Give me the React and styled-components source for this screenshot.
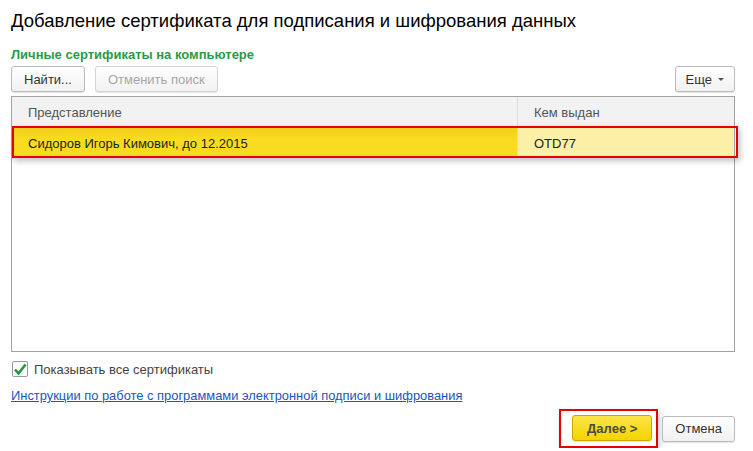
import React from 'react';
import styled, { createGlobalStyle } from 'styled-components';

const GlobalStyle = createGlobalStyle`
  body {
    margin: 0;
    background: #fff;
    font-family: "Liberation Sans", Arial, sans-serif;
    color: #333;
  }
`;

const Form = styled.div`
  width: 753px;
  box-sizing: border-box;
  padding: 9px 18px 0 11px;
  display: flex;
  flex-direction: column;
`;

const Title = styled.h1`
  margin: 0;
  font-size: 18.5px;
  line-height: 23px;
  font-weight: normal;
  color: #000;
`;

const GroupCaption = styled.div`
  margin-top: 15px;
  font-size: 13px;
  line-height: 16px;
  font-weight: bold;
  color: #2a9a48;
`;

const Toolbar = styled.div`
  display: flex;
  gap: 10px;
  margin-top: 3px;
`;

const Spacer = styled.div`
  flex: 1;
`;

const Button = styled.button`
  height: 26px;
  padding: 0 ${(p) => p.$pad || 12}px;
  box-sizing: border-box;
  border: 1px solid ${(p) => (p.disabled ? '#d4d4d4' : '#bcbcbc')};
  border-radius: 3px;
  background: linear-gradient(#ffffff, #f1f1f1);
  box-shadow: 0 1px 1px rgba(0, 0, 0, 0.12);
  font-family: inherit;
  font-size: 13px;
  color: ${(p) => (p.disabled ? '#a6a6a6' : '#333')};
  display: flex;
  align-items: center;
  gap: 6px;
`;

const PrimaryButton = styled(Button)`
  border-color: #c9a800;
  background: linear-gradient(#fbe54a, #f5d300);
  font-weight: bold;
  color: #4a4a4a;
`;

const Caret = styled.span`
  width: 0;
  height: 0;
  border-left: 3px solid transparent;
  border-right: 3px solid transparent;
  border-top: 3px solid #555;
  margin-top: 1px;
`;

const Table = styled.div`
  flex-shrink: 0;
  margin-top: 4px;
  height: 254px;
  border: 1px solid #a3a3a3;
  display: flex;
  flex-direction: column;
  position: relative;
`;

const Row = styled.div`
  display: grid;
  grid-template-columns: 505px 1fr;
  height: 30px;
  border-bottom: 1px solid ${(p) => (p.$head ? '#e0e0e0' : 'transparent')};
`;

const Cell = styled.div`
  display: flex;
  align-items: center;
  padding-left: 16px;
  font-size: 13px;
  color: ${(p) => (p.$head ? '#555' : '#222')};
  background: ${(p) => p.$bg || 'transparent'};
  border-left: ${(p) => (p.$divider ? '1px solid #dcdcdc' : 'none')};
  white-space: nowrap;
`;

const Highlight = styled.div`
  position: absolute;
  left: 0;
  right: -4px;
  top: ${(p) => p.$top}px;
  height: 32px;
  border: 2px solid #e60000;
  box-sizing: border-box;
  box-shadow: 2px 3px 6px rgba(0, 0, 0, 0.25);
  pointer-events: none;
`;

const CheckRow = styled.label`
  display: flex;
  align-items: center;
  gap: 6px;
  margin-top: 9px;
  font-size: 13px;
  color: #444;
  margin-left: 1px;
`;

const Box = styled.span`
  width: 14px;
  height: 14px;
  border: 1px solid #9a9a9a;
  border-radius: 2px;
  background: #fff;
  display: flex;
  align-items: center;
  justify-content: center;
`;

const Link = styled.a`
  margin-top: 11px;
  font-size: 12.9px;
  color: #1d56b8;
  text-decoration: underline;
  align-self: flex-start;
`;

const Footer = styled.div`
  display: flex;
  justify-content: flex-end;
  align-items: center;
  gap: 10px;
  margin-top: 6px;
`;

const Marked = styled.div`
  padding: 4px 4px 5px 11px;
  border: 2px solid #e60000;
  box-shadow: 2px 3px 6px rgba(0, 0, 0, 0.2);
  margin-right: -6px;
`;

export default function App() {
  return (
    <>
      <GlobalStyle />
      <Form>
        <Title>Добавление сертификата для подписания и шифрования данных</Title>
        <GroupCaption>Личные сертификаты на компьютере</GroupCaption>
        <Toolbar>
          <Button>Найти...</Button>
          <Button disabled>Отменить поиск</Button>
          <Spacer />
          <Button $pad={10}>
            Еще <Caret />
          </Button>
        </Toolbar>
        <Table>
          <Row $head>
            <Cell $head $bg="#f2f2f2">Представление</Cell>
            <Cell $head $bg="#f2f2f2" $divider>Кем выдан</Cell>
          </Row>
          <Row>
            <Cell $bg="linear-gradient(#f1cf1a, #f9dc20 40%, #f9dc20)">Сидоров Игорь Кимович, до 12.2015</Cell>
            <Cell $bg="#fcf0a6" $divider>OTD77</Cell>
          </Row>
          <Highlight $top={29} />
        </Table>
        <CheckRow>
          <Box>
            <svg width="14" height="13" viewBox="0 0 14 13">
              <path d="M2 6.5 L5.5 10.5 L12.5 1.5" fill="none" stroke="#1f9a3a" strokeWidth="2.6" />
            </svg>
          </Box>
          Показывать все сертификаты
        </CheckRow>
        <Link href="#">Инструкции по работе с программами электронной подписи и шифрования</Link>
        <Footer>
          <Marked>
            <PrimaryButton $pad={14}>Далее &gt;</PrimaryButton>
          </Marked>
          <Button>Отмена</Button>
        </Footer>
      </Form>
    </>
  );
}
